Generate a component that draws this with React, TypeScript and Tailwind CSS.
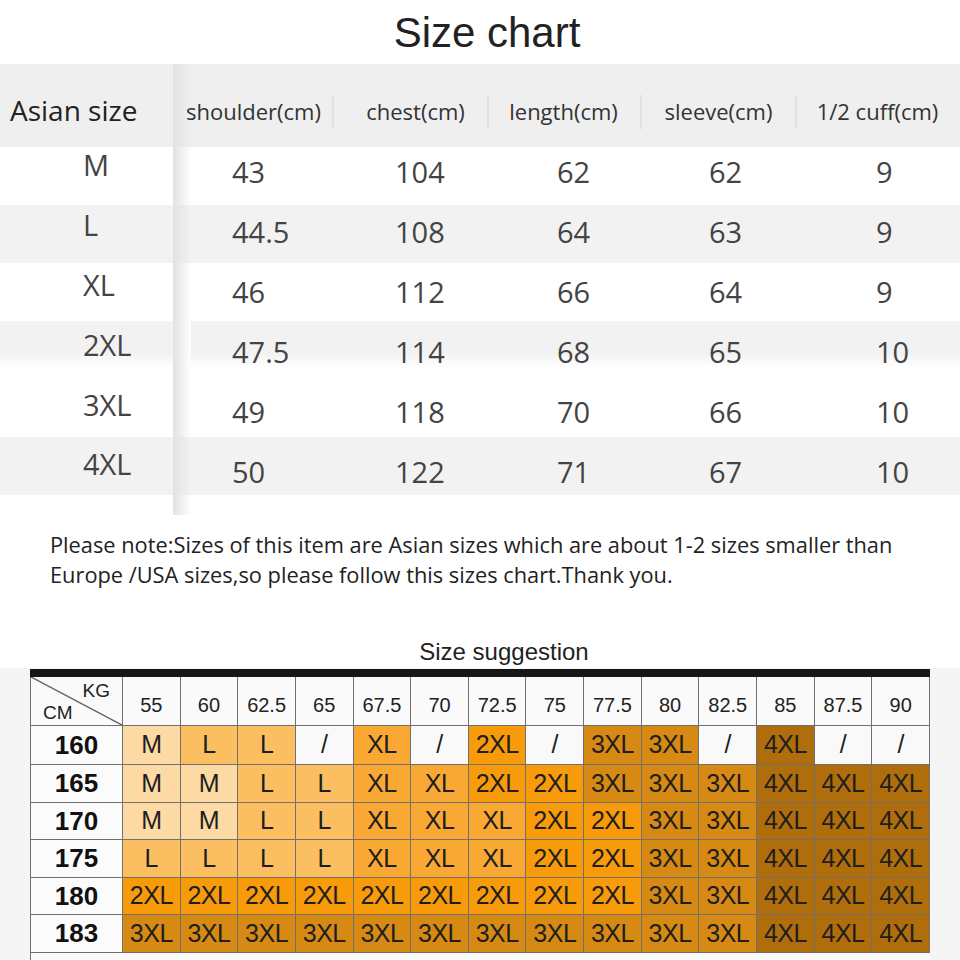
import React from 'react';

// size chart rows (top table); text drifts a little lower per row, like the source image
const measureRows = [
    { size: 'M', values: ['43', '104', '62', '62', '9'], bg: 'bg-white', fade: 'to-white', lp: 'pt-[3px]', vp: 'pt-[10px]' },
    { size: 'L', values: ['44.5', '108', '64', '63', '9'], bg: 'bg-[#f2f2f2]', fade: 'to-[#f2f2f2]', lp: 'pt-[5px]', vp: 'pt-[12px]' },
    { size: 'XL', values: ['46', '112', '66', '64', '9'], bg: 'bg-white', fade: 'to-white', lp: 'pt-[7px]', vp: 'pt-[14px]' },
    {
        size: '2XL',
        values: ['47.5', '114', '68', '65', '10'],
        bg: 'bg-gradient-to-b from-[#f2f2f2] from-55% to-white to-80%',
        fade: 'to-white',
        lp: 'pt-[9px]',
        vp: 'pt-[16px]',
    },
    { size: '3XL', values: ['49', '118', '70', '66', '10'], bg: 'bg-white', fade: 'to-white', lp: 'pt-[11px]', vp: 'pt-[18px]' },
    { size: '4XL', values: ['50', '122', '71', '67', '10'], bg: 'bg-[#f2f2f2]', fade: 'to-[#f2f2f2]', lp: 'pt-[12px]', vp: 'pt-[20px]' },
];

const headers = ['shoulder(cm)', 'chest(cm)', 'length(cm)', 'sleeve(cm)', '1/2 cuff(cm)'];

// nudges for header text, and left padding of the value in each column
const headerPad = ['pr-[16px]', 'pl-[10px]', 'pr-[2px]', '', 'pr-[2px]'];
const valuePad = ['pl-[41px]', 'pl-[63px]', 'pl-[70px]', 'pl-[69px]', 'pl-[81px]'];

const weights = ['55', '60', '62.5', '65', '67.5', '70', '72.5', '75', '77.5', '80', '82.5', '85', '87.5', '90'];

const suggestion: { cm: string; h: string; sizes: string[] }[] = [
    { cm: '160', h: 'h-[38px]', sizes: ['M', 'L', 'L', '/', 'XL', '/', '2XL', '/', '3XL', '3XL', '/', '4XL', '/', '/'] },
    { cm: '165', h: 'h-[37px]', sizes: ['M', 'M', 'L', 'L', 'XL', 'XL', '2XL', '2XL', '3XL', '3XL', '3XL', '4XL', '4XL', '4XL'] },
    { cm: '170', h: 'h-[36px]', sizes: ['M', 'M', 'L', 'L', 'XL', 'XL', 'XL', '2XL', '2XL', '3XL', '3XL', '4XL', '4XL', '4XL'] },
    { cm: '175', h: 'h-[37px]', sizes: ['L', 'L', 'L', 'L', 'XL', 'XL', 'XL', '2XL', '2XL', '3XL', '3XL', '4XL', '4XL', '4XL'] },
    { cm: '180', h: 'h-[36px]', sizes: ['2XL', '2XL', '2XL', '2XL', '2XL', '2XL', '2XL', '2XL', '2XL', '3XL', '3XL', '4XL', '4XL', '4XL'] },
    { cm: '183', h: 'h-[37px]', sizes: ['3XL', '3XL', '3XL', '3XL', '3XL', '3XL', '3XL', '3XL', '3XL', '3XL', '3XL', '4XL', '4XL', '4XL'] },
];

const cellColor: Record<string, string> = {
    M: 'bg-[#fdd9a4]',
    L: 'bg-[#fbbf62]',
    XL: 'bg-[#f9a833]',
    '2XL': 'bg-[#f89b0b]',
    '3XL': 'bg-[#d68a13]',
    '4XL': 'bg-[#b06d0b]',
    '/': 'bg-[#f9f9f9]',
};

const SizeChart = () => (
    <div className="font-['Open_Sans',sans-serif]">
        <div className="grid grid-cols-[173px_18px_141px_155px_153px_155px_165px] h-[83px] bg-[#efefef]">
            <div className="flex items-center pl-[10px] pt-[8px] text-[28px] text-[#222]">Asian size</div>
            <div className="bg-gradient-to-r from-[#e3e3e3] to-[#efefef]" />
            {headers.map((h, i) => (
                <div key={h} className="flex items-center pt-[12px]">
                    <div
                        className={
                            i === 0
                                ? `flex h-[34px] w-full items-center justify-center text-[22px] text-[#333] ${headerPad[i]}`
                                : `flex h-[34px] w-full items-center justify-center border-l-2 border-[#e2e2e2] text-[22px] text-[#333] ${headerPad[i]}`
                        }
                    >
                        {h}
                    </div>
                </div>
            ))}
        </div>

        {measureRows.map(row => (
            <div key={row.size} className={`grid grid-cols-[173px_18px_141px_155px_153px_155px_165px] h-[58px] ${row.bg}`}>
                <div className={`pl-[83px] text-[29px] leading-[30px] text-[#444] ${row.lp}`}>{row.size}</div>
                <div className={`bg-gradient-to-r from-[#e2e2e2] ${row.fade}`} />
                {row.values.map((v, i) => (
                    <div key={i} className={`text-[29px] leading-[30px] text-[#444] ${row.vp} ${valuePad[i]}`}>
                        {v}
                    </div>
                ))}
            </div>
        ))}

        <div className="grid grid-cols-[173px_18px_1fr] h-[20px]">
            <div />
            <div className="bg-gradient-to-r from-[#e2e2e2] to-white" />
            <div />
        </div>
    </div>
);

const SizeSuggestion = () => (
    <div className="bg-[#f5f5f5] pt-px pl-[30px] pb-[40px] font-['Liberation_Sans',Arial,sans-serif]">
        <div className="w-[900px] bg-[#707070] px-px">
            <div className="h-[8px] -mx-px bg-[#161616]" />
            <div className="grid grid-cols-[91px_repeat(14,minmax(0,1fr))] gap-px">
                <div className="relative flex h-[48px] flex-col justify-between bg-[#fafafa] px-[12px] pt-[3px] pb-[1px] text-[19px] leading-[22px] text-[#222]">
                    <svg className="absolute inset-0 h-full w-full" preserveAspectRatio="none" viewBox="0 0 100 100">
                        <line x1="0" y1="0" x2="100" y2="100" stroke="#666" strokeWidth="1.5" vectorEffect="non-scaling-stroke" />
                    </svg>
                    <span className="self-end">KG</span>
                    <span className="self-start">CM</span>
                </div>
                {weights.map(w => (
                    <div key={w} className="flex h-[48px] items-center justify-center bg-[#fafafa] pt-[8px] text-[20px] text-[#222]">
                        {w}
                    </div>
                ))}

                {suggestion.map(row => (
                    <React.Fragment key={row.cm}>
                        <div className={`flex ${row.h} items-center justify-center bg-[#fbfbfb] text-[26px] font-bold text-[#111]`}>
                            {row.cm}
                        </div>
                        {row.sizes.map((s, i) => (
                            <div
                                key={i}
                                className={`flex ${row.h} items-center justify-center ${cellColor[s]} text-[25px] tracking-[-0.5px] text-[#1e1e1e]`}
                            >
                                {s}
                            </div>
                        ))}
                    </React.Fragment>
                ))}
            </div>
            <div className="mt-px h-[20px] -mr-px bg-[#fbfbfb]" />
        </div>
    </div>
);

export default function App() {
    return (
        <div className="h-[960px] w-[960px] overflow-hidden bg-white">
            <div className="flex h-[64px] items-center justify-center pl-[14px] font-['Liberation_Sans',Arial,sans-serif] text-[42px] text-[#222]">
                Size chart
            </div>

            <SizeChart />

            <div className="mt-[15px] pl-[50px] font-['Open_Sans',sans-serif] text-[21.8px] leading-[30px] text-[#222]">
                <p>Please note:Sizes of this item are Asian sizes which are about 1-2 sizes smaller than</p>
                <p>Europe /USA sizes,so please follow this sizes chart.Thank you.</p>
            </div>

            <div className="mt-[48px] flex h-[28px] items-center justify-center pl-[48px] font-['Liberation_Sans',Arial,sans-serif] text-[24px] leading-[28px] text-[#222]">
                Size suggestion
            </div>
            <div className="h-[2px]" />

            <SizeSuggestion />
        </div>
    );
}
